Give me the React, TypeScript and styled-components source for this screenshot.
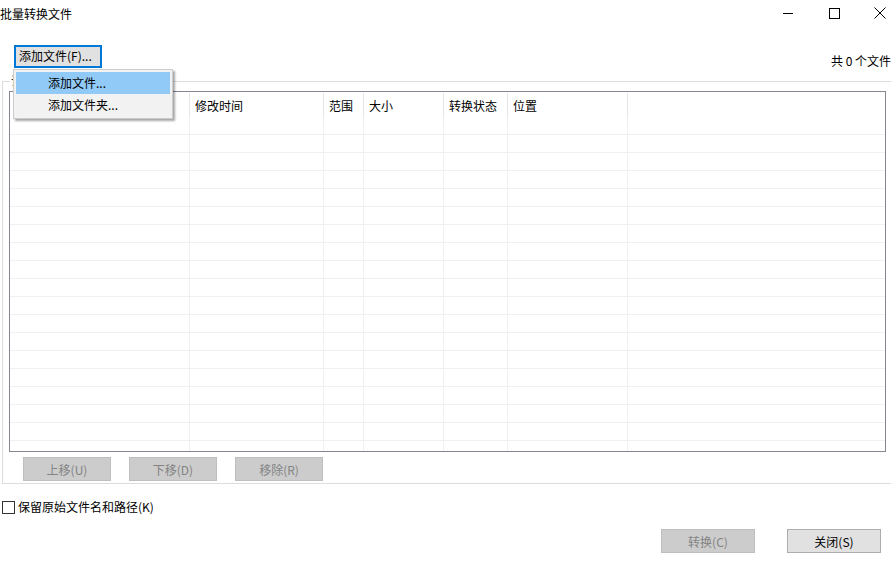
import styled, { createGlobalStyle } from "styled-components";

const COLUMNS = [
  { title: "文件名", width: 180 },
  { title: "修改时间", width: 134 },
  { title: "范围", width: 40 },
  { title: "大小", width: 80 },
  { title: "转换状态", width: 64 },
  { title: "位置", width: 120 },
  { title: "", width: 0 }
];

const GRID = COLUMNS.map(({ width }) => (width ? `${width}px` : "1fr")).join(" ");
const ROW_COUNT = 19;

const GlobalStyle = createGlobalStyle`
  html, body {
    margin: 0;
    padding: 0;
    background: #ffffff;
  }
  body {
    font-family: "Noto Sans CJK SC", "Noto Sans", sans-serif;
    font-size: 12px;
    color: #000000;
  }
`;

const App = () => (
  <>
    <GlobalStyle />
    <Window>
      <TitleBar>
        <Title>批量转换文件</Title>
        <WindowControls>
          <ControlButton>
            <svg width="10" height="10" viewBox="0 0 10 10">
              <line x1="0" y1="5.5" x2="10" y2="5.5" stroke="#000" strokeWidth="1" />
            </svg>
          </ControlButton>
          <ControlButton>
            <svg width="11" height="11" viewBox="0 0 11 11">
              <rect x="0.5" y="0.5" width="10" height="10" fill="none" stroke="#000" strokeWidth="1" />
            </svg>
          </ControlButton>
          <ControlButton>
            <svg width="12" height="12" viewBox="0 0 12 12">
              <path d="M0.5 0.5 L11.5 11.5 M11.5 0.5 L0.5 11.5" stroke="#000" strokeWidth="1" />
            </svg>
          </ControlButton>
        </WindowControls>
      </TitleBar>

      <Toolbar>
        <MenuAnchor>
          <FocusedButton>添加文件(F)...</FocusedButton>
          <DropMenu>
            <MenuItem active>添加文件...</MenuItem>
            <MenuItem>添加文件夹...</MenuItem>
          </DropMenu>
        </MenuAnchor>
        <Counter>共 0 个文件</Counter>
      </Toolbar>

      <GroupBox>
        <GroupLabel>说明</GroupLabel>
        <ListView>
          <HeaderRow>
            {COLUMNS.map(({ title }, index) => (
              <HeaderCell key={index}>{title}</HeaderCell>
            ))}
          </HeaderRow>
          <Body>
            {new Array(ROW_COUNT).fill(null).map((_, row) => (
              <BodyRow key={row}>
                {COLUMNS.map((_, col) => (
                  <BodyCell key={col} />
                ))}
              </BodyRow>
            ))}
          </Body>
        </ListView>
        <ListButtons>
          <DialogButton disabled width={88}>上移(U)</DialogButton>
          <DialogButton disabled width={88}>下移(D)</DialogButton>
          <DialogButton disabled width={88}>移除(R)</DialogButton>
        </ListButtons>
      </GroupBox>

      <CheckRow>
        <CheckBox />
        <span>保留原始文件名和路径(K)</span>
      </CheckRow>

      <Footer>
        <DialogButton disabled width={94}>转换(C)</DialogButton>
        <DialogButton width={94}>关闭(S)</DialogButton>
      </Footer>
    </Window>
  </>
);

const Window = styled.div`
  width: 891px;
  height: 561px;
  display: flex;
  flex-direction: column;
  overflow: hidden;
  background: #ffffff;
`;

const TitleBar = styled.div`
  height: 27px;
  display: flex;
  align-items: center;
  justify-content: space-between;
`;

const Title = styled.div`
  line-height: 14px;
`;

const WindowControls = styled.div`
  display: flex;
  align-items: center;
  height: 100%;
  margin-right: -12px;
`;

const ControlButton = styled.div`
  width: 46px;
  height: 100%;
  display: flex;
  align-items: center;
  justify-content: center;
  margin-top: -1px;
`;

const Toolbar = styled.div`
  display: flex;
  justify-content: space-between;
  align-items: flex-end;
  padding: 18px 0 0 14px;
`;

const MenuAnchor = styled.div`
  position: relative;
`;

const FocusedButton = styled.div`
  box-sizing: border-box;
  width: 88px;
  height: 23px;
  border: 2px solid #0078d7;
  background: #e1e1e1;
  padding-left: 3px;
  line-height: 18px;
  white-space: nowrap;
`;

const DropMenu = styled.div`
  position: absolute;
  top: 24px;
  left: -1px;
  width: 160px;
  box-sizing: border-box;
  border: 1px solid #cccccc;
  background: #f2f2f2;
  padding: 2px;
  box-shadow: 2px 2px 2px rgba(0, 0, 0, 0.35);
  z-index: 2;
`;

const MenuItem = styled.div<{ active?: boolean }>`
  height: 22px;
  line-height: 22px;
  padding-left: 32px;
  background: ${({ active }) => (active ? "#91c9f7" : "transparent")};
  white-space: nowrap;
`;

const Counter = styled.div`
  line-height: 14px;
  white-space: nowrap;
`;

const GroupBox = styled.div`
  position: relative;
  margin: 13px 0 0 2px;
  width: 892px;
  box-sizing: border-box;
  border: 1px solid #dcdcdc;
  padding: 9px 0 2px 6px;
`;

const GroupLabel = styled.div`
  position: absolute;
  top: -8px;
  left: 7px;
  padding: 0 1px;
  background: #ffffff;
  line-height: 14px;
`;

const ListView = styled.div`
  box-sizing: border-box;
  width: 877px;
  height: 361px;
  border: 1px solid #828790;
  display: flex;
  flex-direction: column;
  overflow: hidden;
`;

const HeaderRow = styled.div`
  display: grid;
  grid-template-columns: ${GRID};
  height: 25px;
  flex-shrink: 0;
`;

const HeaderCell = styled.div`
  box-sizing: border-box;
  border-right: 1px solid #e5e5e5;
  margin-top: 1px;
  padding: 1px 0 0 5px;
  line-height: 24px;
  white-space: nowrap;
  overflow: hidden;

  &:last-child {
    border-right: none;
  }
`;

const Body = styled.div`
  flex: 1;
  overflow: hidden;
`;

const BodyRow = styled.div`
  display: grid;
  grid-template-columns: ${GRID};
  height: 18px;
`;

const BodyCell = styled.div`
  box-sizing: border-box;
  border-right: 1px solid #f0f0f0;
  border-bottom: 1px solid #f0f0f0;

  &:last-child {
    border-right: none;
  }
`;

const ListButtons = styled.div`
  display: flex;
  gap: 18px;
  margin: 5px 0 0 14px;
`;

const DialogButton = styled.div<{ disabled?: boolean; width: number }>`
  box-sizing: border-box;
  width: ${({ width }) => width}px;
  height: 24px;
  border: 1px solid ${({ disabled }) => (disabled ? "#bfbfbf" : "#adadad")};
  background: ${({ disabled }) => (disabled ? "#cccccc" : "#e1e1e1")};
  color: ${({ disabled }) => (disabled ? "#838383" : "#000000")};
  display: flex;
  align-items: center;
  justify-content: center;
  white-space: nowrap;
`;

const CheckRow = styled.div`
  display: flex;
  align-items: center;
  gap: 3px;
  margin: 16px 0 0 2px;
  line-height: 14px;
`;

const CheckBox = styled.div`
  box-sizing: border-box;
  width: 13px;
  height: 13px;
  border: 1px solid #333333;
  background: #ffffff;
`;

const Footer = styled.div`
  display: flex;
  justify-content: flex-end;
  gap: 32px;
  margin-top: 15px;
  padding-right: 10px;
`;

export default App;
